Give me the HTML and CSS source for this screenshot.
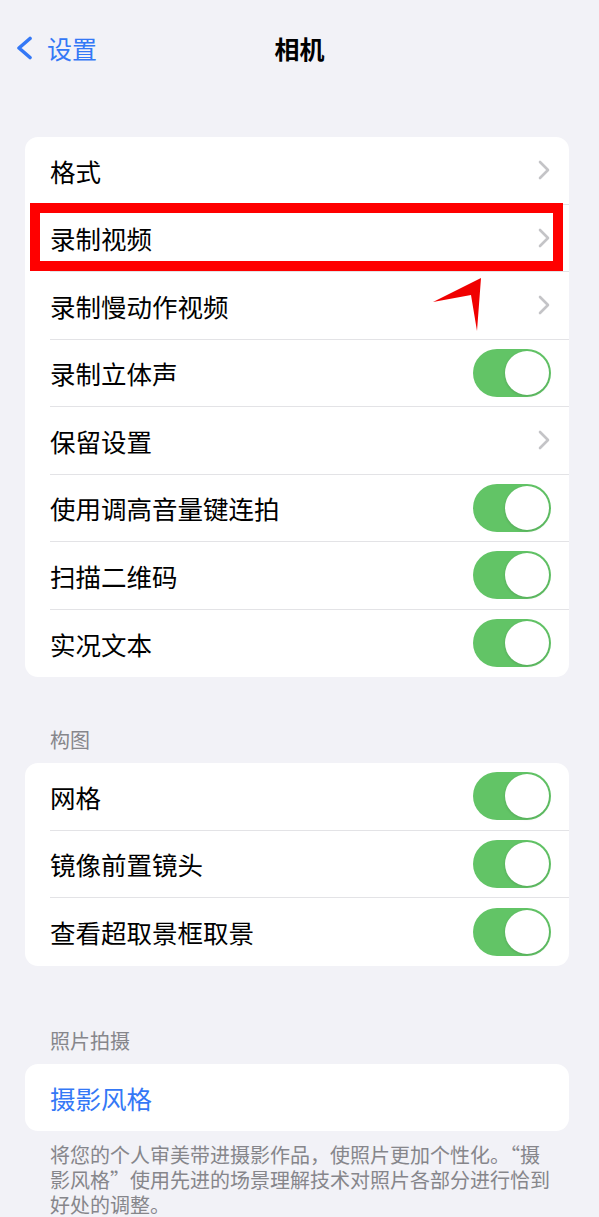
FILE: index.html
```html
<!DOCTYPE html>
<html lang="zh-CN">
<head>
    <meta charset="utf-8">
    <title>相机</title>
    <link rel="stylesheet" href="styles.css">
</head>
<body>
    <div class="page">
        <div class="nav">
            <div class="nav-back">
                <svg class="back-icon" width="18" height="24" viewBox="0 0 18 24"><path d="M15 2.5 L4 12 L15 21.5" /></svg>
                <span>设置</span>
            </div>
            <div class="nav-title">相机</div>
            <div></div>
        </div>

        <div class="card first-card">
            <div class="row"><div class="row-inner"><span>格式</span><svg class="chev" width="12" height="20" viewBox="0 0 12 20"><path d="M2 2 L10 10 L2 18" /></svg></div></div>
            <div class="row"><div class="row-inner"><span>录制视频</span><svg class="chev" width="12" height="20" viewBox="0 0 12 20"><path d="M2 2 L10 10 L2 18" /></svg></div></div>
            <div class="row"><div class="row-inner"><span>录制慢动作视频</span><svg class="chev" width="12" height="20" viewBox="0 0 12 20"><path d="M2 2 L10 10 L2 18" /></svg></div></div>
            <div class="row"><div class="row-inner"><span>录制立体声</span><span class="toggle"><span class="knob"></span></span></div></div>
            <div class="row"><div class="row-inner"><span>保留设置</span><svg class="chev" width="12" height="20" viewBox="0 0 12 20"><path d="M2 2 L10 10 L2 18" /></svg></div></div>
            <div class="row"><div class="row-inner"><span>使用调高音量键连拍</span><span class="toggle"><span class="knob"></span></span></div></div>
            <div class="row"><div class="row-inner"><span>扫描二维码</span><span class="toggle"><span class="knob"></span></span></div></div>
            <div class="row"><div class="row-inner"><span>实况文本</span><span class="toggle"><span class="knob"></span></span></div></div>
        </div>

        <div class="section-title">构图</div>
        <div class="card">
            <div class="row"><div class="row-inner"><span>网格</span><span class="toggle"><span class="knob"></span></span></div></div>
            <div class="row"><div class="row-inner"><span>镜像前置镜头</span><span class="toggle"><span class="knob"></span></span></div></div>
            <div class="row"><div class="row-inner"><span>查看超取景框取景</span><span class="toggle"><span class="knob"></span></span></div></div>
        </div>

        <div class="section-title second">照片拍摄</div>
        <div class="card">
            <div class="row short"><div class="row-inner"><span class="link">摄影风格</span></div></div>
        </div>
        <p class="footer">将您的个人审美带进摄影作品，使照片更加个性化。“摄影风格”使用先进的场景理解技术对照片各部分进行恰到好处的调整。</p>

        <!-- annotation drawn over the screenshot -->
        <div class="highlight"></div>
        <svg class="arrow" width="56" height="60" viewBox="0 0 56 60"><polygon points="51,3 3,27 41,20 47,56" /></svg>
    </div>
</body>
</html>
```

FILE: styles.css
```css
body { margin: 0; background: #f2f2f7; font-family: "Noto Sans CJK SC", "Noto Sans", sans-serif; color: #000; }
.page { position: relative; width: 599px; }

.nav { display: grid; grid-template-columns: 1fr auto 1fr; align-items: center; height: 96px; }
.nav-back { display: flex; align-items: center; gap: 14px; padding-left: 15px; color: #3478f6; font-size: 25px; }
.back-icon path { fill: none; stroke: #3478f6; stroke-width: 3.6; stroke-linecap: round; stroke-linejoin: round; }
.nav-title { font-size: 25px; font-weight: 700; }

.card { background: #fff; border-radius: 13px; margin: 0 30px 0 25px; overflow: hidden; }
.first-card { margin-top: 41px; }
.row { padding-left: 25px; }
.row-inner { display: flex; align-items: center; justify-content: space-between; height: 67.5px; padding-right: 18px; border-bottom: 1px solid #e3e3e6; box-sizing: border-box; font-size: 25.5px; }
.row:last-child .row-inner { border-bottom: none; }
.row.short .row-inner { height: 67px; }
.link { color: #3478f6; }

.chev { margin-right: 1px; }
.chev path { fill: none; stroke: #c4c4c7; stroke-width: 2.6; stroke-linecap: round; stroke-linejoin: round; }

.toggle { position: relative; display: block; width: 78px; height: 48px; border-radius: 24px; background: #62c466; }
.knob { position: absolute; top: 2px; right: 2px; width: 44px; height: 44px; border-radius: 50%; background: #fff; box-shadow: 0 1px 3px rgba(0,0,0,0.15); }

.section-title { margin: 51px 0 11px; padding-left: 50px; font-size: 20px; line-height: 24px; color: #86868b; }
.section-title.second { margin-top: 63px; }

.footer { margin: 0; padding: 11px 49px 0 50px; font-size: 20px; line-height: 25px; color: #86868b; }

.highlight { position: absolute; left: 30px; top: 203px; width: 533px; height: 68px; border: 10px solid #ff0000; box-sizing: border-box; }
.arrow { position: absolute; left: 430px; top: 275px; }
.arrow polygon { fill: #f00000; }
```
